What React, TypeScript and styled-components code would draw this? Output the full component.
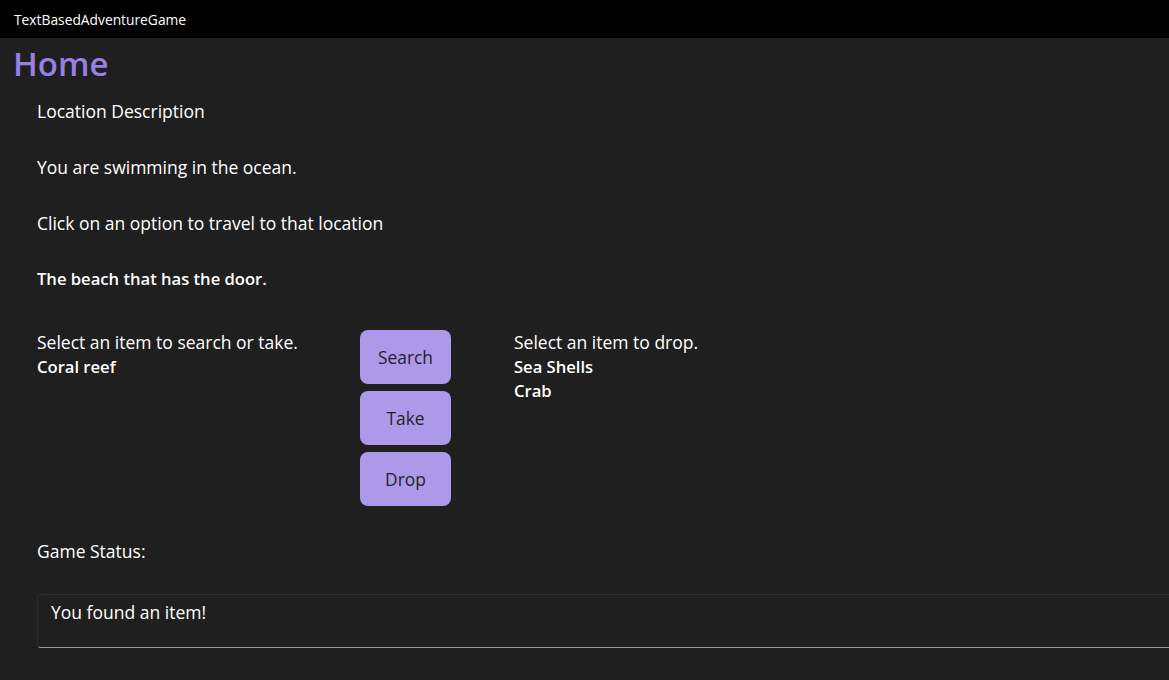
import React from "react";
import styled, { createGlobalStyle } from "styled-components";

const GlobalStyle = createGlobalStyle`
  html, body {
    margin: 0;
    padding: 0;
    background-color: #1f1f1f;
    overflow: hidden;
  }
  body {
    font-family: "Open Sans", "Noto Sans", sans-serif;
    color: #ffffff;
  }
`;

const Window = styled.div`
  width: 1169px;
  height: 680px;
  display: flex;
  flex-direction: column;
  background-color: #1f1f1f;
  overflow: hidden;
`;

const TitleBar = styled.div`
  height: 38px;
  flex-shrink: 0;
  background-color: #000000;
  display: flex;
  align-items: center;
  padding-left: 14px;
  font-size: 13.8px;
  color: #ffffff;
`;

const Heading = styled.h1`
  margin: 0;
  padding: 2px 0 0 13px;
  height: 47px;
  line-height: 47px;
  font-size: 33px;
  font-weight: 600;
  color: #9880e5;
`;

const Content = styled.div`
  display: flex;
  flex-direction: column;
  padding: 12px 0 0 37px;
`;

const Stack = styled.div`
  display: flex;
  flex-direction: column;
  gap: 32px;
`;

const Text = styled.div<{ $bold?: boolean }>`
  font-size: ${p => (p.$bold ? "16.6px" : "17.5px")};
  line-height: 24px;
  font-weight: ${p => (p.$bold ? 600 : 400)};
  color: #ffffff;
  white-space: nowrap;
`;

const ItemsRow = styled.div`
  display: flex;
  margin-top: 39px;
`;

const ItemColumn = styled.div<{ $width?: number }>`
  display: flex;
  flex-direction: column;
  width: ${p => (p.$width ? `${p.$width}px` : "auto")};
  ${Text} {
    line-height: 24.5px;
  }
`;

const ButtonColumn = styled.div`
  display: flex;
  flex-direction: column;
  gap: 7px;
  width: 91px;
  margin-right: 63px;
`;

const ActionButton = styled.button`
  width: 91px;
  height: 54px;
  border: none;
  border-radius: 8px;
  background-color: #ac99ea;
  color: #242424;
  font-family: "Open Sans", "Noto Sans", sans-serif;
  font-size: 17.4px;
  padding: 0;
  cursor: pointer;
`;

const StatusLabel = styled(Text)`
  margin-top: 33px;
`;

const StatusBox = styled.div`
  margin-top: 31px;
  width: 1200px;
  height: 54px;
  box-sizing: border-box;
  border: 1px solid #2d2d2d;
  border-bottom-color: #9a9a9a;
  border-radius: 4px;
  padding: 5px 13px;
  background-color: #1f1f1f;
  ${Text} {
    line-height: 24px;
  }
`;

const App: React.FC = () => {
  return (
    <Window>
      <GlobalStyle />
      <TitleBar>TextBasedAdventureGame</TitleBar>
      <Heading>Home</Heading>
      <Content>
        <Stack>
          <Text>Location Description</Text>
          <Text>You are swimming in the ocean.</Text>
          <Text>Click on an option to travel to that location</Text>
          <Text $bold>The beach that has the door.</Text>
        </Stack>
        <ItemsRow>
          <ItemColumn $width={323}>
            <Text>Select an item to search or take.</Text>
            <Text $bold>Coral reef</Text>
          </ItemColumn>
          <ButtonColumn>
            <ActionButton>Search</ActionButton>
            <ActionButton>Take</ActionButton>
            <ActionButton>Drop</ActionButton>
          </ButtonColumn>
          <ItemColumn>
            <Text>Select an item to drop.</Text>
            <Text $bold>Sea Shells</Text>
            <Text $bold>Crab</Text>
          </ItemColumn>
        </ItemsRow>
        <StatusLabel>Game Status:</StatusLabel>
        <StatusBox>
          <Text>You found an item!</Text>
        </StatusBox>
      </Content>
    </Window>
  );
};

export default App;
